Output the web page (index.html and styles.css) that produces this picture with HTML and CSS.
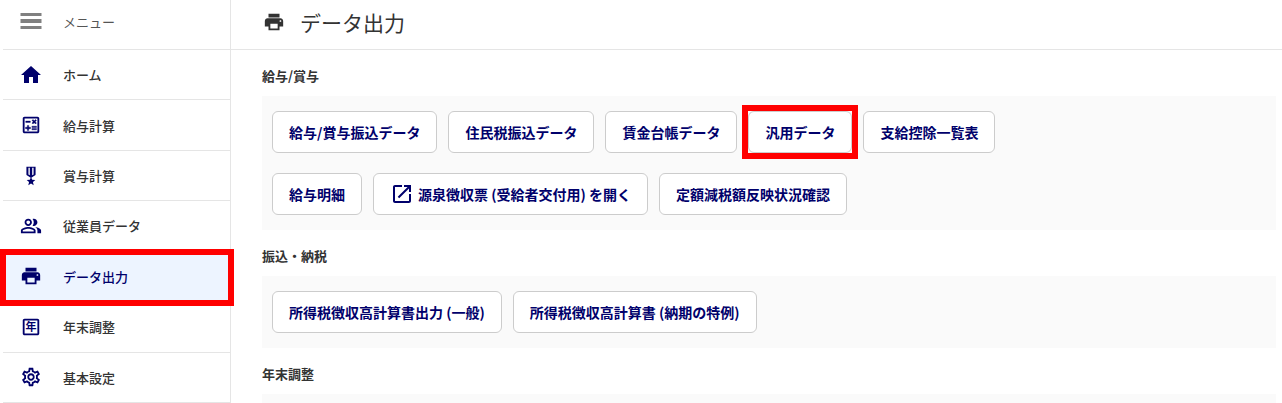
FILE: index.html
```html
<!DOCTYPE html>
<html lang="ja">
<head>
    <meta charset="UTF-8">
    <meta name="viewport" content="width=device-width, initial-scale=1.0">
    <title>データ出力</title>
    <link rel="stylesheet" href="styles.css">
</head>
<body>
<div class="app">
    <div class="sidebar">
        <button type="button" class="menu-toggle">
            <svg class="icon icon-menu" viewBox="0 0 21 17"><path d="M0 0h21v3H0zM0 6h21v4H0zM0 13h21v3H0z"/></svg>
            メニュー
        </button>
        <nav class="menu">
            <a href="#" class="menu-item">
                <svg class="icon icon-large" viewBox="0 0 24 24"><path d="M10 20v-6h4v6h5v-8h3L12 3 2 12h3v8z"/></svg>
                ホーム
            </a>
            <a href="#" class="menu-item">
                <svg class="icon" viewBox="0 0 24 24"><path d="M19 3H5c-1.1 0-2 .9-2 2v14c0 1.1.9 2 2 2h14c1.1 0 2-.9 2-2V5c0-1.1-.9-2-2-2zm0 16H5V5h14v14z"/><path class="icon-bold" d="M6.25 7.72h5v1.5h-5zM13 15.75h5v1.5h-5zM13 13.25h5v1.5h-5zM8 18h1.5v-2h2v-1.5h-2v-2H8v2H6V16h2zM14.09 10.95l1.41-1.41 1.41 1.41 1.06-1.06-1.41-1.42 1.41-1.41L16.91 6 15.5 7.41 14.09 6l-1.06 1.06 1.41 1.41-1.41 1.42z"/></svg>
                給与計算
            </a>
            <a href="#" class="menu-item">
                <svg class="icon" viewBox="0 0 24 24"><path fill-rule="evenodd" d="M17 10.43V2H7v8.43c0 .35.18.68.49.86l4.18 2.51-.99 2.34-3.41.29 2.59 2.24L9.07 22 12 20.23 14.93 22l-.78-3.33 2.59-2.24-3.41-.29-.99-2.34 4.18-2.51c.3-.18.48-.5.48-.86zM9.2 3H10.7v8.2L9.2 10.300zM13.300 3h1.500v7.300l-1.500.9z"/></svg>
                賞与計算
            </a>
            <a href="#" class="menu-item">
                <svg class="icon" viewBox="0 0 24 24"><path d="M16.67 13.13C18.04 14.06 19 15.32 19 17v3h4v-3c0-2.18-3.57-3.47-6.33-3.87zM15 12c2.21 0 4-1.79 4-4s-1.79-4-4-4c-.47 0-.91.1-1.33.24C14.5 5.27 15 6.58 15 8s-.5 2.73-1.33 3.76c.42.14.86.24 1.33.24zM9 12c2.21 0 4-1.79 4-4s-1.79-4-4-4-4 1.79-4 4 1.79 4 4 4zm0-6c1.1 0 2 .9 2 2s-.9 2-2 2-2-.9-2-2 .9-2 2-2zm0 7c-2.67 0-8 1.34-8 4v3h16v-3c0-2.66-5.33-4-8-4zm6 5H3v-.99C3.2 16.29 6.3 15 9 15s5.8 1.29 6 2v1z"/></svg>
                従業員データ
            </a>
            <a href="#" class="menu-item current marked">
                <svg class="icon" viewBox="0 0 24 24"><path d="M19 8H5c-1.66 0-3 1.34-3 3v6h4v4h12v-4h4v-6c0-1.66-1.34-3-3-3zm-3 11H8v-5h8v5zm3-7c-.55 0-1-.45-1-1s.45-1 1-1 1 .45 1 1-.45 1-1 1zm-1-9H6v4h12V3z"/></svg>
                データ出力
            </a>
            <a href="#" class="menu-item">
                <svg class="icon" viewBox="0 0 24 24"><path d="M19 3H5c-1.1 0-2 .9-2 2v14c0 1.1.9 2 2 2h14c1.1 0 2-.9 2-2V5c0-1.1-.9-2-2-2zm0 16H5V5h14v14z"/><text class="icon-text" x="12" y="16" text-anchor="middle">年</text></svg>
                年末調整
            </a>
            <a href="#" class="menu-item">
                <svg class="icon" viewBox="0 0 24 24"><path d="M19.43 12.98c.04-.32.07-.64.07-.98 0-.34-.03-.66-.07-.98l2.11-1.65c.19-.15.24-.42.12-.64l-2-3.46c-.09-.16-.26-.25-.44-.25-.06 0-.12.01-.17.03l-2.49 1c-.52-.4-1.08-.73-1.69-.98l-.38-2.65C14.46 2.18 14.25 2 14 2h-4c-.25 0-.46.18-.49.42l-.38 2.65c-.61.25-1.17.59-1.69.98l-2.49-1c-.06-.02-.12-.03-.18-.03-.17 0-.34.09-.43.25l-2 3.46c-.13.22-.07.49.12.64l2.11 1.65c-.04.32-.07.65-.07.98 0 .33.03.66.07.98l-2.11 1.65c-.19.15-.24.42-.12.64l2 3.46c.09.16.26.25.44.25.06 0 .12-.01.17-.03l2.49-1c.52.4 1.08.73 1.69.98l.38 2.65c.03.24.24.42.49.42h4c.25 0 .46-.18.49-.42l.38-2.65c.61-.25 1.17-.59 1.69-.98l2.49 1c.06.02.12.03.18.03.17 0 .34-.09.43-.25l2-3.46c.12-.22.07-.49-.12-.64l-2.11-1.65zm-1.98-1.71c.04.31.05.52.05.73 0 .21-.02.43-.05.73l-.14 1.13.89.7 1.08.84-.7 1.21-1.27-.51-1.04-.42-.9.68c-.43.32-.84.56-1.25.73l-1.06.43-.16 1.13-.2 1.35h-1.4l-.19-1.35-.16-1.13-1.06-.43c-.43-.18-.83-.41-1.23-.71l-.91-.7-1.06.43-1.27.51-.7-1.21 1.08-.84.89-.7-.14-1.13c-.03-.31-.05-.54-.05-.74s.02-.43.05-.73l.14-1.13-.89-.7-1.08-.84.7-1.21 1.27.51 1.04.42.9-.68c.43-.32.84-.56 1.25-.73l1.06-.43.16-1.13.2-1.35h1.39l.19 1.35.16 1.13 1.06.43c.43.18.83.41 1.23.71l.91.7 1.06-.43 1.27-.51.7 1.21-1.07.85-.89.7.14 1.13zM12 8c-2.21 0-4 1.79-4 4s1.79 4 4 4 4-1.79 4-4-1.79-4-4-4zm0 6c-1.1 0-2-.9-2-2s.9-2 2-2 2 .9 2 2-.9 2-2 2z"/></svg>
                基本設定
            </a>
        </nav>
    </div>

    <main class="main">
        <header class="page-header">
            <svg class="icon" viewBox="0 0 24 24"><path d="M19 8H5c-1.66 0-3 1.34-3 3v6h4v4h12v-4h4v-6c0-1.66-1.34-3-3-3zm-3 11H8v-5h8v5zm3-7c-.55 0-1-.45-1-1s.45-1 1-1 1 .45 1 1-.45 1-1 1zm-1-9H6v4h12V3z"/></svg>
            <h1>データ出力</h1>
        </header>
        <section>
            <h2>給与/賞与</h2>
            <div class="panel">
                <button type="button">給与/賞与振込データ</button>
                <button type="button">住民税振込データ</button>
                <button type="button">賃金台帳データ</button>
                <button type="button" class="marked">汎用データ</button>
                <button type="button">支給控除一覧表</button>
                <span class="line-break"></span>
                <button type="button">給与明細</button>
                <button type="button"><svg class="icon icon-large" viewBox="0 0 24 24"><path d="M19 19H5V5h7V3H5c-1.11 0-2 .9-2 2v14c0 1.1.89 2 2 2h14c1.1 0 2-.9 2-2v-7h-2v7zM14 3v2h3.59l-9.83 9.83 1.41 1.41L19 6.41V10h2V3h-7z"/></svg>源泉徴収票 (受給者交付用) を開く</button>
                <button type="button">定額減税額反映状況確認</button>
            </div>
        </section>
        <section>
            <h2>振込・納税</h2>
            <div class="panel">
                <button type="button">所得税徴収高計算書出力 (一般)</button>
                <button type="button">所得税徴収高計算書 (納期の特例)</button>
            </div>
        </section>
        <section>
            <h2>年末調整</h2>
            <div class="panel"></div>
        </section>
    </main>
</div>
</body>
</html>
```
FILE: styles.css
```css
* {
    box-sizing: border-box;
}
body {
    margin: 0;
    font-family: "Noto Sans CJK JP", sans-serif;
    font-size: 13px;
    color: #333;
    background-color: #fff;
}
button {
    font-family: inherit;
    cursor: pointer;
}
.app {
    display: flex;
    height: 100vh;
    overflow: hidden;
}

/* サイドメニュー */
.sidebar {
    position: relative;
    z-index: 1;
    display: flex;
    flex-direction: column;
    flex: 0 0 231px;
    padding-left: 3px;
    border-right: 1px solid #e5e5e5;
}
.menu-toggle, .menu-item {
    display: flex;
    align-items: center;
    gap: 21px;
    padding: 0 17px;
    border: none;
    border-bottom: 1px solid #e5e5e5;
}
.menu-toggle {
    flex: 0 0 50px;
    padding-bottom: 7px;
    background: none;
    font-size: 13px;
    color: #555;
}
.menu {
    display: flex;
    flex-direction: column;
    flex: 1;
}
.menu-item {
    flex: 1 0 50px;
    max-height: 51px;
    font-weight: 500;
    color: #333;
    text-decoration: none;
}
.menu-item.current {
    background-color: #edf4ff;
    color: #00006b;
}
.icon {
    flex: none;
    width: 22px;
    height: 22px;
    fill: #00006b;
}
.icon-large {
    width: 24px;
    height: 24px;
}
.menu-item .icon-large {
    margin: 0 -1px;
}
.icon-menu {
    height: 17px;
    fill: #808080;
}
.icon-bold {
    stroke: #00006b;
    stroke-width: 0.4;
}
.icon-text {
    font-size: 12px;
    font-weight: bold;
}

/* 赤枠 */
.marked {
    position: relative;
}
.marked::after {
    content: "";
    position: absolute;
    inset: -7px;
    border: 6px solid #f00;
}
.menu-item.marked::after {
    inset: -3px -4px -5px -3px;
}

/* メイン */
.main {
    flex: 1;
    min-width: 0;
}
.page-header {
    display: flex;
    align-items: center;
    gap: 15px;
    height: 50px;
    padding: 0 32px 6px;
    border-bottom: 1px solid #e5e5e5;
}
.page-header .icon {
    fill: #333;
}
h1 {
    margin: 0;
    font-size: 21px;
    font-weight: normal;
}
section {
    padding: 0 6px 0 31px;
}
h2 {
    margin: 0;
    padding: 16px 0 10px;
    font-size: 13px;
    line-height: 20px;
}
.panel {
    display: flex;
    flex-wrap: wrap;
    column-gap: 11px;
    min-height: 72px;
    padding: 15px 10px;
    background-color: #fafafa;
}
.line-break {
    flex: 0 0 100%;
    height: 20px;
}
.panel button {
    display: flex;
    align-items: center;
    gap: 4px;
    height: 42px;
    padding: 0 16px;
    border: 1px solid #ccc;
    border-radius: 6px;
    background-color: #fff;
    font-size: 14px;
    font-weight: bold;
    color: #00006b;
}
```
